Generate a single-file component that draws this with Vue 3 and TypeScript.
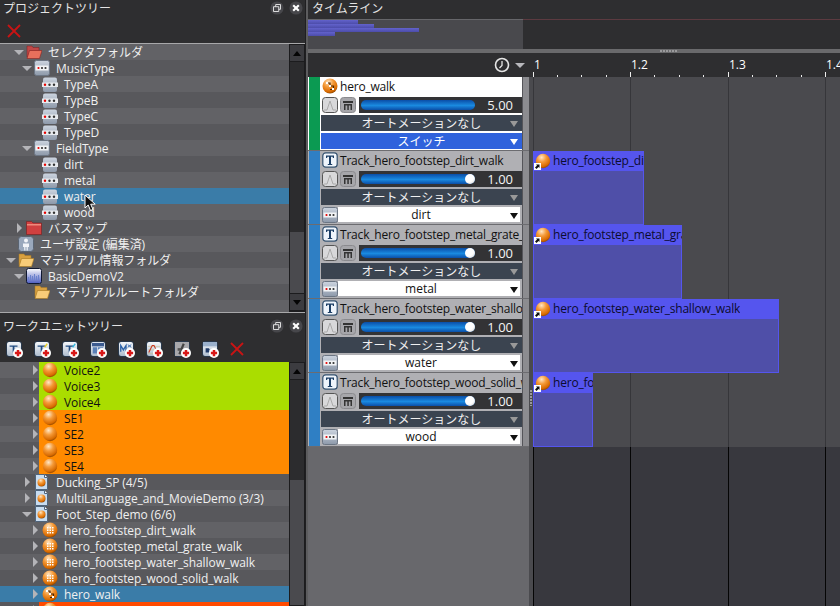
<script setup lang="ts">
interface TreeRow {
  label: string
  depth: number
  arrow?: 'open' | 'closed'
  icon: string
  selected?: boolean
  color?: string
  dark?: boolean
}

interface Track {
  name: string
  icon: string
  color: string
  volume: number
  value: string
  selector: string
  header: boolean
}

interface Clip {
  name: string
  width: number
}

const projectRows: TreeRow[] = [
  { label: 'セレクタフォルダ', depth: 2, arrow: 'open', icon: 'folder-red-open' },
  { label: 'MusicType', depth: 3, arrow: 'open', icon: 'selector' },
  { label: 'TypeA', depth: 4, icon: 'label' },
  { label: 'TypeB', depth: 4, icon: 'label' },
  { label: 'TypeC', depth: 4, icon: 'label' },
  { label: 'TypeD', depth: 4, icon: 'label' },
  { label: 'FieldType', depth: 3, arrow: 'open', icon: 'selector' },
  { label: 'dirt', depth: 4, icon: 'label' },
  { label: 'metal', depth: 4, icon: 'label' },
  { label: 'water', depth: 4, icon: 'label', selected: true },
  { label: 'wood', depth: 4, icon: 'label' },
  { label: 'バスマップ', depth: 2, arrow: 'closed', icon: 'folder-red' },
  { label: 'ユーザ設定 (編集済)', depth: 1, icon: 'user' },
  { label: 'マテリアル情報フォルダ', depth: 1, arrow: 'open', icon: 'folder-yellow' },
  { label: 'BasicDemoV2', depth: 2, arrow: 'open', icon: 'material' },
  { label: 'マテリアルルートフォルダ', depth: 3, icon: 'folder-yellow' },
]

const workRows: TreeRow[] = [
  { label: 'Voice2', depth: 4, arrow: 'closed', icon: 'ball', color: '#aadd00', dark: true },
  { label: 'Voice3', depth: 4, arrow: 'closed', icon: 'ball', color: '#aadd00', dark: true },
  { label: 'Voice4', depth: 4, arrow: 'closed', icon: 'ball', color: '#aadd00', dark: true },
  { label: 'SE1', depth: 4, arrow: 'closed', icon: 'ball', color: '#ff8a00', dark: true },
  { label: 'SE2', depth: 4, arrow: 'closed', icon: 'ball', color: '#ff8a00', dark: true },
  { label: 'SE3', depth: 4, arrow: 'closed', icon: 'ball', color: '#ff8a00', dark: true },
  { label: 'SE4', depth: 4, arrow: 'closed', icon: 'ball', color: '#ff8a00', dark: true },
  { label: 'Ducking_SP (4/5)', depth: 3, arrow: 'closed', icon: 'workunit' },
  { label: 'MultiLanguage_and_MovieDemo (3/3)', depth: 3, arrow: 'closed', icon: 'workunit' },
  { label: 'Foot_Step_demo (6/6)', depth: 3, arrow: 'open', icon: 'workunit' },
  { label: 'hero_footstep_dirt_walk', depth: 4, arrow: 'closed', icon: 'cue' },
  { label: 'hero_footstep_metal_grate_walk', depth: 4, arrow: 'closed', icon: 'cue' },
  { label: 'hero_footstep_water_shallow_walk', depth: 4, arrow: 'closed', icon: 'cue' },
  { label: 'hero_footstep_wood_solid_walk', depth: 4, arrow: 'closed', icon: 'cue' },
  { label: 'hero_walk', depth: 4, arrow: 'closed', icon: 'cue-switch', selected: true },
  { label: '', depth: 4, arrow: 'closed', icon: 'ball', color: '#ff4a00', dark: true },
]

const addTools = ['tool-t', 'tool-ty', 'tool-tc', 'tool-grid', 'tool-m', 'tool-curve', 'tool-slash', 'tool-b']

const tracks: Track[] = [
  { name: 'hero_walk', icon: 'cue-switch', color: '#0b9a52', volume: 100, value: '5.00', selector: 'スイッチ', header: true },
  { name: 'Track_hero_footstep_dirt_walk', icon: 'track', color: '#2f7fc4', volume: 100, value: '1.00', selector: 'dirt', header: false },
  { name: 'Track_hero_footstep_metal_grate_walk', icon: 'track', color: '#2f7fc4', volume: 100, value: '1.00', selector: 'metal', header: false },
  { name: 'Track_hero_footstep_water_shallow_walk', icon: 'track', color: '#2f7fc4', volume: 100, value: '1.00', selector: 'water', header: false },
  { name: 'Track_hero_footstep_wood_solid_walk', icon: 'track', color: '#2f7fc4', volume: 100, value: '1.00', selector: 'wood', header: false },
]

const clips: Clip[] = [
  { name: 'hero_footstep_dirt_walk', width: 111 },
  { name: 'hero_footstep_metal_grate_walk', width: 149 },
  { name: 'hero_footstep_water_shallow_walk', width: 246 },
  { name: 'hero_footstep_wood_solid_walk', width: 60 },
]

const overviewBars = [50, 66, 111, 27]

const rulerLabels = [
  { text: '1', x: 0 },
  { text: '1.2', x: 97 },
  { text: '1.3', x: 195 },
  { text: '1.4', x: 292 },
]

const majorTicks = [0, 97, 195, 292]
const minorTicks = [24, 48, 73, 121, 146, 170, 219, 243, 268]
</script>

<template>
  <div class="app">
    <svg class="defs" width="0" height="0">
      <defs>
        <radialGradient id="orange" cx="0.4" cy="0.25" r="0.8">
          <stop offset="0" stop-color="#ffe6c4" />
          <stop offset="0.4" stop-color="#f59a38" />
          <stop offset="0.8" stop-color="#d86a00" />
          <stop offset="1" stop-color="#7a3c00" />
        </radialGradient>
        <linearGradient id="silver" x1="0" y1="0" x2="0" y2="1">
          <stop offset="0" stop-color="#ccd4df" />
          <stop offset="1" stop-color="#8d99aa" />
        </linearGradient>
        <linearGradient id="blue-v" x1="0" y1="0" x2="0" y2="1">
          <stop offset="0" stop-color="#ffffff" />
          <stop offset="1" stop-color="#4c5cc0" />
        </linearGradient>
        <symbol id="ball" viewBox="0 0 16 16">
          <circle cx="8" cy="8" r="7.200" fill="url(#orange)" />
        </symbol>
        <symbol id="cue" viewBox="0 0 16 16">
          <circle cx="8" cy="8" r="7.500" fill="url(#orange)" />
          <path d="M5 5h1.500v1.500H5zM7.500 5H9v1.500H7.500zM10 5h1.500v1.500H10zM5 7.500h1.500V9H5zM7.500 7.500H9V9H7.500zM10 7.500h1.500V9H10zM5 10h1.500v1.500H5zM7.500 10H9v1.500H7.500zM10 10h1.500v1.500H10z" fill="#fff" />
        </symbol>
        <symbol id="cue-switch" viewBox="0 0 16 16">
          <circle cx="8" cy="8" r="7.500" fill="url(#orange)" />
          <path d="M4.500 5H8v3h3.500v3.500H8" fill="none" stroke="#4a2400" stroke-width="1.200" />
          <path d="M4 4h2v2H4zM7 7h2v2H7zM10 10h2v2h-2z" fill="#fff" />
        </symbol>
        <symbol id="folder-red-open" viewBox="0 0 16 14">
          <path d="M1 1h5l1 1.500h6V6H4L2 12H1z" fill="#c04848" stroke="#7c1c1c" stroke-width="0.500" />
          <path d="M3.500 5.500H16l-2.500 8H1z" fill="#e8705c" stroke="#8a2420" stroke-width="0.600" />
        </symbol>
        <symbol id="folder-red" viewBox="0 0 16 14">
          <path d="M0.500 0.500h5L7 2h8.500v11.500H0.500z" fill="#d04040" stroke="#7c1c1c" stroke-width="0.600" />
          <path d="M1 3h14v1.500H1z" fill="#ee8a7c" />
        </symbol>
        <symbol id="folder-yellow" viewBox="0 0 16 14">
          <path d="M1 1h5l1 1.500h6V6H4L2 12H1z" fill="#d8a040" stroke="#a87820" stroke-width="0.500" />
          <path d="M3.500 5.500H16l-2.500 8H1z" fill="#f8cc78" stroke="#a87820" stroke-width="0.600" />
        </symbol>
        <symbol id="selector" viewBox="0 0 16 16">
          <rect x="0.500" y="0.500" width="15" height="15" rx="2" fill="url(#silver)" stroke="#6c7684" />
          <rect x="1.500" y="5.500" width="13" height="5" fill="#f2f4f6" />
          <circle cx="4.500" cy="8" r="1.100" fill="#e80000" />
          <circle cx="8" cy="8" r="1.100" fill="#333" />
          <circle cx="11.500" cy="8" r="1.100" fill="#333" />
        </symbol>
        <symbol id="label" viewBox="0 0 16 16">
          <rect x="1" y="1.500" width="14" height="14.500" rx="2" fill="url(#silver)" />
          <rect x="0" y="6.500" width="16" height="4.500" fill="#e8ebef" />
          <circle cx="3" cy="8.800" r="1.200" fill="#e80000" />
          <circle cx="7.500" cy="8.800" r="1.200" fill="#333" />
          <circle cx="12" cy="8.800" r="1.200" fill="#333" />
        </symbol>
        <symbol id="user" viewBox="0 0 16 16">
          <rect x="0.500" y="0.500" width="15" height="15" rx="3" fill="#9aa8bc" stroke="#5a6472" />
          <circle cx="8" cy="4.500" r="2" fill="#f2f4f8" />
          <path d="M5 7.500h6v3.500H9.800v3.500H8.600V11H7.400v3.500H6.200V11H5z" fill="#f2f4f8" />
        </symbol>
        <symbol id="material" viewBox="0 0 16 16">
          <rect x="0.500" y="0.500" width="15" height="15" rx="2" fill="url(#blue-v)" stroke="#101830" />
          <path d="M2 9h1v3H2zM4 7h1v5H4zM6 8h1v4H6zM8 6h1v6H8zM10 8h1v4h-1zM12 7h1v5h-1z" fill="#6a82cc" />
        </symbol>
        <symbol id="workunit" viewBox="0 0 16 16">
          <path d="M1.500 0.500h9l3 3v12h-12z" fill="#c8dcf0" stroke="#50657c" />
          <path d="M10.500 0.500v3h3" fill="#fff" stroke="#50657c" />
          <circle cx="7.500" cy="8.500" r="4" fill="url(#orange)" />
        </symbol>
        <symbol id="track" viewBox="0 0 16 16">
          <rect x="0.800" y="0.800" width="14.400" height="14.400" rx="3" fill="#eef4fb" stroke="#33506e" stroke-width="1.200" />
          <path d="M4 3.500h8v2.500h-1L10.500 4.800H9V12h1.200v1H5.800v-1H7V4.800H5.500L5 6H4z" fill="#1d3f66" />
        </symbol>
        <symbol id="tool-t" viewBox="0 0 16 16">
          <path d="M3 4h9v1.500H8.500V12H6.500V5.500H3z" fill="#1f4a80" />
        </symbol>
        <symbol id="tool-ty" viewBox="0 0 16 16">
          <path d="M3 4h9v1.500H8.500V12H6.500V5.500H3z" fill="#1f4a80" />
          <path d="M11 6l3-4" stroke="#e8d020" stroke-width="1.500" />
        </symbol>
        <symbol id="tool-tc" viewBox="0 0 16 16">
          <path d="M3 4h9v1.500H8.500V12H6.500V5.500H3z" fill="#1f4a80" />
          <path d="M11 6l3-4" stroke="#30b8e0" stroke-width="1.500" />
        </symbol>
        <symbol id="tool-grid" viewBox="0 0 16 16">
          <path d="M1 1h14v4H1z" fill="#3a5a90" />
          <path d="M2 6h5v7H2zM8 6h6v3H8z" fill="#5a80b8" />
        </symbol>
        <symbol id="tool-m" viewBox="0 0 16 16">
          <path d="M2 11V4l3 5 3-5v7" fill="none" stroke="#2a60a8" stroke-width="1.500" />
          <path d="M10 3l4 3M14 3l-4 3" stroke="#2a60a8" />
        </symbol>
        <symbol id="tool-curve" viewBox="0 0 16 16">
          <path d="M1 5h14M1 9h14M1 13h14" stroke="#c8c090" stroke-width="0.700" />
          <path d="M2 12l4-8h2l3 6h3" fill="none" stroke="#c83820" stroke-width="1.200" />
        </symbol>
        <symbol id="tool-slash" viewBox="0 0 16 16">
          <rect width="16" height="16" fill="#a8a8ac" />
          <path d="M10 2L5 14" stroke="#444" stroke-width="2.500" />
          <path d="M3 7h4v3H3z" fill="#555" />
        </symbol>
        <symbol id="tool-b" viewBox="0 0 16 16">
          <rect width="16" height="5" fill="#9ab0cc" />
          <path d="M3 7h3.500l1 1v1l-1 .5 1 .5v1.500l-1 .5H3z" fill="#1f3a68" />
        </symbol>
        <symbol id="window" viewBox="0 0 16 16">
          <circle cx="8" cy="8" r="7.500" fill="#47474b" />
          <path d="M4 6.500h6v5.500H4zM6.500 6.500V4H12v5.500h-2" fill="none" stroke="#f0f0f0" stroke-width="1" />
        </symbol>
        <symbol id="close" viewBox="0 0 16 16">
          <circle cx="8" cy="8" r="7.500" fill="#47474b" />
          <path d="M4.800 4.800l6.400 6.400M11.200 4.800l-6.400 6.400" stroke="#fff" stroke-width="2.400" />
        </symbol>
        <symbol id="delete" viewBox="0 0 14 14">
          <path d="M1 1l12 12M13 1L1 13" stroke="#c81414" stroke-width="1.800" />
        </symbol>
        <symbol id="plus" viewBox="0 0 8 8">
          <circle cx="4" cy="4" r="4" fill="#fff" />
          <path d="M1.500 3h5v2h-5zM3 1.500h2v5H3z" fill="#d81818" />
        </symbol>
        <symbol id="curve" viewBox="0 0 16 16">
          <rect x="0.500" y="0.500" width="15" height="15" rx="3" fill="#d8d8da" stroke="#555" />
          <path d="M2 13h3l3-9 3 9h3" fill="none" stroke="#aaa" stroke-width="1" />
        </symbol>
        <symbol id="mute" viewBox="0 0 16 16">
          <rect x="0.500" y="0.500" width="15" height="15" rx="3" fill="#a6a6aa" stroke="#8a8a8e" />
          <path d="M3 4h10v2H3zM4 7h8v6h-1.500V8.500h-1.700V13H7.300V8.500H5.500V13H4z" fill="#333" />
        </symbol>
      </defs>
    </svg>

    <div class="left">
      <section class="panel project">
        <header class="panel-head">
          <span class="panel-title">プロジェクトツリー</span>
          <span class="win-btns">
            <svg width="14" height="14"><use href="#window" /></svg>
            <svg width="14" height="14"><use href="#close" /></svg>
          </span>
        </header>
        <div class="toolbar project-bar">
          <svg class="del" width="14" height="14"><use href="#delete" /></svg>
        </div>
        <div class="tree-wrap">
          <div class="tree">
            <div
              v-for="row in projectRows"
              :key="row.label"
              class="row"
              :class="{ selected: row.selected }"
            >
              <span class="indent" :style="{ width: row.depth * 8 - 1 + 'px' }"></span>
              <span class="arrow" :class="row.arrow"></span>
              <span class="row-body">
                <svg class="row-icon" width="16" height="16"><use :href="'#' + row.icon" /></svg>
                <span class="row-text">{{ row.label }}</span>
              </span>
            </div>
            <div class="row filler"></div>
          </div>
          <div class="scrollbar">
            <span class="sb-btn"><i class="tri up"></i></span>
            <span class="sb-thumb thumb-top"></span>
            <span class="sb-track"></span>
            <span class="sb-btn"><i class="tri down"></i></span>
          </div>
          <svg class="cursor" width="13" height="18" viewBox="0 0 13 18">
            <path d="M1 1v13l3.200-3 2.300 5.500 2.500-1-2.300-5.300h4.500z" fill="#111" stroke="#fff" stroke-width="1" />
          </svg>
        </div>
      </section>

      <section class="panel work">
        <header class="panel-head work-head">
          <span class="panel-title">ワークユニットツリー</span>
          <span class="win-btns">
            <svg width="14" height="14"><use href="#window" /></svg>
            <svg width="14" height="14"><use href="#close" /></svg>
          </span>
        </header>
        <div class="toolbar work-bar">
          <span v-for="(t, i) in addTools" :key="i" class="add-tool">
            <svg width="14" height="14"><use :href="'#' + t" /></svg>
            <svg class="add-plus" width="10" height="10"><use href="#plus" /></svg>
          </span>
          <svg class="del" width="14" height="14"><use href="#delete" /></svg>
        </div>
        <div class="tree-wrap work-tree">
          <div class="tree">
            <div
              v-for="(row, i) in workRows"
              :key="i"
              class="row"
              :class="{ selected: row.selected }"
            >
              <span class="indent" :style="{ width: row.depth * 8 - 1 + 'px' }"></span>
              <span class="arrow" :class="row.arrow"></span>
              <span class="row-body" :class="{ dark: row.dark }" :style="{ background: row.color }">
                <svg class="row-icon" width="16" height="16"><use :href="'#' + row.icon" /></svg>
                <span class="row-text">{{ row.label }}</span>
              </span>
            </div>
          </div>
          <div class="scrollbar">
            <span class="sb-btn"><i class="tri up"></i></span>
            <span class="sb-thumb thumb-work"></span>
            <span class="sb-track"></span>
          </div>
        </div>
      </section>
    </div>

    <div class="timeline">
      <header class="tl-head">タイムライン</header>
      <div class="overview">
        <div class="overview-bars">
          <span v-for="(w, i) in overviewBars" :key="i" class="ov-bar" :style="{ width: w + 'px' }"></span>
        </div>
        <div class="overview-rest"></div>
      </div>
      <div class="splitter"><span class="grip"></span></div>
      <div class="tl-top">
        <div class="clock-box">
          <svg width="16" height="16" viewBox="0 0 16 16">
            <circle cx="8" cy="8" r="6.500" fill="#2e2e30" stroke="#e6e6e6" stroke-width="1.600" />
            <path d="M8 4v4.500L5.500 11" fill="none" stroke="#e6e6e6" stroke-width="1.300" />
          </svg>
          <i class="clock-arrow"></i>
        </div>
        <div class="ruler">
          <span v-for="l in rulerLabels" :key="l.text" class="ruler-label" :style="{ left: l.x + 1 + 'px' }">{{ l.text }}</span>
          <i v-for="x in majorTicks" :key="'M' + x" class="tick major" :style="{ left: x + 'px' }"></i>
          <i v-for="x in minorTicks" :key="'m' + x" class="tick" :style="{ left: x + 'px' }"></i>
        </div>
      </div>
      <div class="tl-main">
        <div class="track-col">
          <div class="tracks">
            <div v-for="t in tracks" :key="t.name" class="track" :class="{ head: t.header }">
              <span class="strip" :style="{ background: t.color }"></span>
              <div class="track-body">
                <div class="name-row">
                  <svg width="16" height="16"><use :href="'#' + t.icon" /></svg>
                  <span class="track-name">{{ t.name }}</span>
                </div>
                <div class="vol-row">
                  <svg width="16" height="16"><use href="#curve" /></svg>
                  <svg width="16" height="16"><use href="#mute" /></svg>
                  <div class="slider-box">
                    <div class="slider">
                      <span class="fill" :style="{ width: t.volume + '%' }"></span>
                      <span v-if="!t.header" class="knob"></span>
                    </div>
                    <span class="vol-value">{{ t.value }}</span>
                  </div>
                </div>
                <div class="drop auto">
                  <span>オートメーションなし</span>
                  <i class="drop-arrow grey"></i>
                </div>
                <div v-if="t.header" class="drop switch">
                  <span>{{ t.selector }}</span>
                  <i class="drop-arrow white"></i>
                </div>
                <div v-else class="sel-row">
                  <svg width="16" height="16"><use href="#selector" /></svg>
                  <div class="drop label-drop">
                    <span>{{ t.selector }}</span>
                    <i class="drop-arrow black"></i>
                  </div>
                </div>
              </div>
              <span class="track-edge"></span>
            </div>
          </div>
          <div class="track-rest"></div>
          <span class="col-grip"></span>
        </div>
        <div class="seq-area">
          <div class="seq-grid">
            <i v-for="x in majorTicks" :key="x" class="grid-line" :style="{ left: x + 'px' }"></i>
            <div class="seq-blank"></div>
            <div v-for="c in clips" :key="c.name" class="clip-row">
              <div class="clip" :style="{ width: c.width + 'px' }">
                <div class="clip-head">
                  <span class="clip-icon">
                    <svg width="16" height="16"><use href="#ball" /></svg>
                    <svg class="shortcut" width="7" height="7" viewBox="0 0 7 7">
                      <rect width="7" height="7" fill="#fff" />
                      <path d="M2 1.500h3.500V5L4.500 4 2.500 6 1 4.500l2-2z" fill="#111" />
                    </svg>
                  </span>
                  <span class="clip-name">{{ c.name }}</span>
                </div>
              </div>
            </div>
          </div>
          <div class="seq-bottom">
            <i v-for="x in majorTicks" :key="x" class="grid-line black" :style="{ left: x + 'px' }"></i>
          </div>
        </div>
      </div>
    </div>
  </div>
</template>

<style>
html,
body {
  margin: 0;
  background: #2e2e30;
}
</style>

<style scoped>
.app {
  display: flex;
  width: 840px;
  height: 606px;
  overflow: hidden;
  background: #2e2e30;
  color: #eee;
  font-family: "Open Sans", "Noto Sans CJK JP", sans-serif;
  font-size: 12px;
}

.defs {
  position: absolute;
}

.left {
  display: flex;
  flex-direction: column;
  width: 305px;
  flex: none;
  border-right: 1px solid #1f1f21;
}

.panel {
  display: flex;
  flex-direction: column;
}

.panel-head {
  display: flex;
  align-items: center;
  justify-content: space-between;
  height: 16px;
  padding: 0 2px 0 3px;
}

.work-head {
  height: 20px;
  padding-top: 3px;
}

.panel-title {
  color: #e4e4e4;
  font-size: 12px;
}

.win-btns {
  display: flex;
  gap: 5px;
}

.toolbar {
  display: flex;
  align-items: center;
}

.project-bar {
  height: 27px;
  padding-left: 7px;
  border-bottom: 1px solid #a8a8aa;
}

.project-bar .del {
  margin-top: 2px;
}

.work-bar {
  height: 26px;
  padding-left: 6px;
  gap: 12px;
}

.add-tool {
  position: relative;
  width: 16px;
  height: 16px;
  border-radius: 3px;
  background: linear-gradient(#f4f7fb, #aebccd);
  border: 1px solid #28384c;
  box-sizing: border-box;
  display: flex;
  align-items: center;
  justify-content: center;
  overflow: visible;
}

.add-plus {
  position: absolute;
  right: -2px;
  bottom: -2px;
}

.tree-wrap {
  position: relative;
  display: flex;
  height: 268px;
  border-bottom: 1px solid #a8a8aa;
}

.work-tree {
  height: 244px;
  border-bottom: 0;
}

.tree {
  flex: 1;
  min-width: 0;
  overflow: hidden;
  background: #5c5c60;
}

.row {
  display: flex;
  height: 16px;
  line-height: 16px;
  background: #626266;
  color: #f0f0f0;
}

.row:nth-child(even) {
  background: #58585c;
}

.row.selected,
.row.selected:nth-child(even) {
  background: #3a7ca8;
}

.filler {
  height: 12px;
}

.indent {
  flex: none;
}

.arrow {
  position: relative;
  flex: none;
  width: 8px;
}

.arrow.open::after {
  content: "";
  position: absolute;
  left: -1px;
  top: 6px;
  border: 5px solid transparent;
  border-top: 5px solid #b4b4b8;
  border-bottom: 0;
}

.arrow.closed::after {
  content: "";
  position: absolute;
  left: 2px;
  top: 3px;
  border: 5px solid transparent;
  border-left: 5px solid #b4b4b8;
  border-right: 0;
}

.row-body {
  flex: 1;
  display: flex;
  align-items: center;
  min-width: 0;
  padding-left: 3px;
}

.row-body.dark {
  color: #111;
}

.row-icon {
  flex: none;
}

.row-text {
  margin-left: 6px;
  margin-top: 2px;
  letter-spacing: -0.08px;
  white-space: nowrap;
}

.scrollbar {
  display: flex;
  flex-direction: column;
  flex: none;
  width: 16px;
  border: 1px solid #1c1c1e;
  border-top: 0;
  box-sizing: border-box;
  background: #2c2c2e;
}

.sb-btn {
  display: flex;
  align-items: center;
  justify-content: center;
  flex: none;
  height: 16px;
  background: #3c3c40;
  border: 1px solid #1c1c1e;
  margin: 0 -1px;
}

.sb-thumb {
  flex: none;
  background: #2c2c2e;
}

.thumb-top {
  height: 170px;
}

.thumb-work {
  height: 100px;
}

.sb-track {
  flex: 1;
  background: #4a4a4e;
}

.tri {
  width: 0;
  height: 0;
  border: 4px solid transparent;
}

.tri.up {
  border-top: 0;
  border-bottom: 5px solid #050505;
}

.tri.down {
  border-bottom: 0;
  border-top: 5px solid #050505;
}

.cursor {
  position: absolute;
  left: 84px;
  top: 150px;
}

.timeline {
  display: flex;
  flex-direction: column;
  flex: 1;
  min-width: 0;
  border-left: 2px solid #5c5c5e;
}

.tl-head {
  height: 19px;
  line-height: 17px;
  padding-left: 4px;
  color: #e4e4e4;
}

.overview {
  display: flex;
  height: 30px;
}

.overview-bars {
  display: flex;
  flex-direction: column;
  flex: none;
  width: 215px;
  background: #49494d;
  border-top: 1px solid #66666a;
  box-sizing: border-box;
}

.ov-bar {
  display: block;
  height: 4px;
  background: linear-gradient(#6262cc, #4c4caa);
}

.overview-rest {
  flex: 1;
  border-top: 1px solid #5c3a40;
}

.splitter {
  position: relative;
  height: 4px;
  background: #6a6a6c;
}

.grip {
  position: absolute;
  left: 352px;
  top: 1px;
  width: 18px;
  height: 2px;
  background: repeating-linear-gradient(90deg, #9a9a9c 0 2px, transparent 2px 3px);
}

.tl-top {
  display: flex;
  height: 24px;
}

.clock-box {
  display: flex;
  align-items: center;
  justify-content: flex-end;
  gap: 5px;
  width: 219px;
  flex: none;
  padding-right: 2px;
  box-sizing: border-box;
}

.clock-arrow {
  width: 0;
  height: 0;
  border: 5px solid transparent;
  border-bottom: 0;
  border-top: 5px solid #b8b8bc;
}

.ruler {
  position: relative;
  flex: 1;
  margin-left: 6px;
}

.ruler-label {
  position: absolute;
  top: 5px;
  color: #fff;
  font-size: 12px;
  line-height: 14px;
}

.tick {
  position: absolute;
  bottom: 0;
  width: 1px;
  height: 2px;
  background: #eee;
}

.tick.major {
  height: 5px;
}

.tl-main {
  display: flex;
  flex: 1;
  min-height: 0;
}

.track-col {
  position: relative;
  display: flex;
  flex-direction: column;
  flex: none;
  width: 225px;
  box-sizing: border-box;
  background: #68686c;
  border-right: 4px solid #4a4a4e;
}

.col-grip {
  position: absolute;
  right: -3px;
  top: 313px;
  width: 2px;
  height: 16px;
  background: repeating-linear-gradient(#9a9a9c 0 2px, transparent 2px 3px);
}

.tracks {
  flex: none;
}

.track {
  display: flex;
  height: 74px;
  box-sizing: border-box;
  padding-left: 1px;
  background: #b0b0b4;
  border-bottom: 1px solid #6c6c70;
  color: #111;
}

.track.head {
  background: #fff;
}

.strip {
  flex: none;
  width: 11px;
  margin-right: 1px;
}

.track-body {
  display: flex;
  flex-direction: column;
  flex: none;
  width: 201px;
}

.track-edge {
  flex: 1;
  background: #8c8c90;
  border-left: 1px solid #55555a;
}

.name-row {
  display: flex;
  align-items: center;
  gap: 2px;
  height: 20px;
  flex: none;
  box-sizing: border-box;
  overflow: hidden;
  padding: 0 0 2px 1px;
  white-space: nowrap;
}

.name-row svg {
  flex: none;
}

.track-name {
  font-size: 12px;
  letter-spacing: -0.2px;
}

.vol-row {
  display: flex;
  align-items: center;
  gap: 2px;
  height: 16px;
  flex: none;
  padding-left: 1px;
}

.slider-box {
  display: flex;
  align-items: center;
  flex: 1;
  height: 16px;
  margin-left: 1px;
  padding-left: 2px;
  background: #333335;
}

.slider {
  position: relative;
  width: 114px;
  height: 10px;
}

.fill {
  display: block;
  height: 100%;
  border-radius: 5px;
  background: linear-gradient(#0a4ea8, #1a8ae0 55%, #0a4ea8);
}

.knob {
  position: absolute;
  right: 0;
  top: 0;
  width: 10px;
  height: 10px;
  border-radius: 50%;
  background: radial-gradient(circle at 40% 35%, #fff 50%, #c4c4c4);
}

.vol-value {
  flex: 1;
  padding-right: 9px;
  color: #f4f4f4;
  font-size: 13px;
  text-align: right;
}

.drop {
  position: relative;
  display: flex;
  align-items: center;
  justify-content: center;
  flex: none;
  height: 16px;
  padding-top: 2px;
  line-height: 16px;
  box-sizing: border-box;
}

.auto {
  margin-top: 2px;
  background: #3b4450;
  color: #f0f0f0;
}

.switch {
  margin-top: 2px;
  background: #2f62dc;
  color: #fff;
}

.drop-arrow {
  position: absolute;
  right: 4px;
  top: 6px;
  border: 4px solid transparent;
  border-bottom: 0;
  border-top: 6px solid #999;
}

.drop-arrow.white {
  border-top-color: #fff;
}

.drop-arrow.black {
  border-top-color: #111;
  right: 2px;
}

.sel-row {
  display: flex;
  align-items: center;
  height: 17px;
  margin-top: 1px;
  flex: none;
  padding-left: 1px;
}

.label-drop {
  flex: 1;
  height: 15px;
  margin-right: 2px;
  padding: 0 16px 0 0;
  background: #fff;
  color: #111;
}

.seq-area {
  display: flex;
  flex-direction: column;
  flex: 1;
  min-width: 0;
}

.seq-grid {
  position: relative;
  background: #4a4a4e;
  height: 370px;
  flex: none;
}

.seq-blank {
  height: 74px;
}

.grid-line {
  position: absolute;
  top: 0;
  bottom: 0;
  width: 1px;
  background: #36363a;
}

.grid-line.black {
  background: #050505;
}

.clip-row {
  position: relative;
  height: 74px;
}

.clip {
  height: 74px;
  box-sizing: border-box;
  background: #4f4fa8;
  border: 1px solid #5555ee;
  border-top: 0;
}

.clip-head {
  display: flex;
  align-items: center;
  gap: 2px;
  height: 20px;
  margin: 0 -1px;
  padding: 0 0 1px 2px;
  box-sizing: border-box;
  overflow: hidden;
  background: #5555ee;
  color: #0c0c30;
  white-space: nowrap;
}

.clip-name {
  overflow: hidden;
  letter-spacing: -0.2px;
}

.clip-icon {
  position: relative;
  flex: none;
  width: 16px;
  height: 16px;
}

.shortcut {
  position: absolute;
  left: -1px;
  bottom: -1px;
}

.seq-bottom {
  position: relative;
  flex: 1;
  background: #38383e;
}
</style>
